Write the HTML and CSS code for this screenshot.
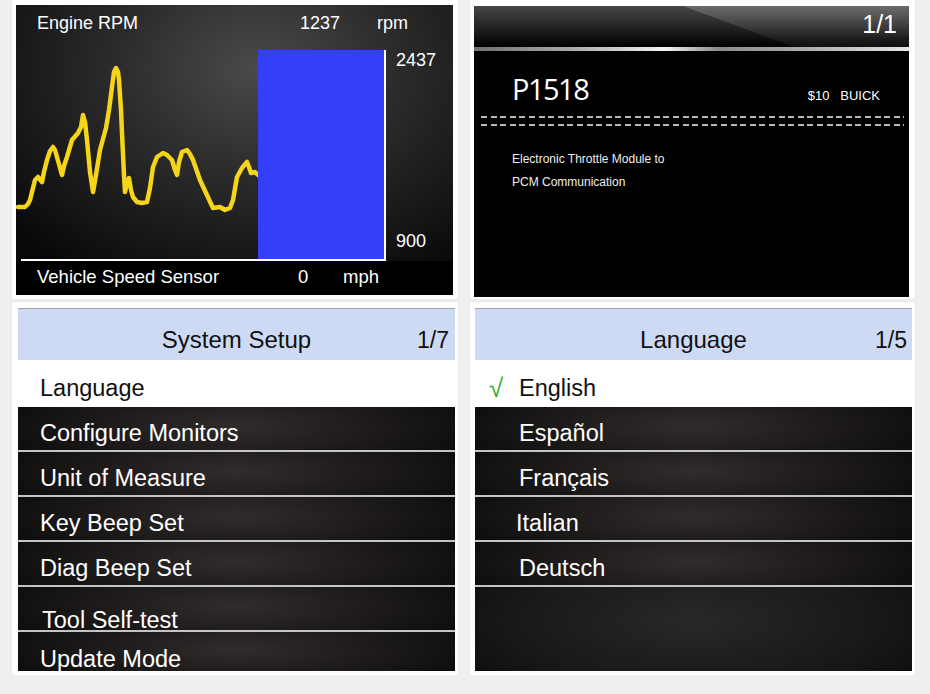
FILE: index.html
```html
<!DOCTYPE html>
<html lang="en">
<head>
    <meta charset="UTF-8">
    <meta name="viewport" content="width=device-width, initial-scale=1.0">
    <title>Scanner Screens</title>
    <link rel="stylesheet" href="styles.css">
</head>
<body>
    <div class="board">
        <!-- Live data graph -->
        <section class="card card-rpm">
            <div class="rpm-screen">
                <div class="rpm-head">
                    <span class="rpm-label">Engine RPM</span>
                    <span class="rpm-value">1237</span>
                    <span>rpm</span>
                </div>
                <div class="rpm-body">
                    <div class="rpm-chart">
                        <svg class="rpm-line" width="242" height="209" viewBox="0 0 242 209">
                            <polyline points="2,157 9,157 12,154 14,150 17,138 19,130 22,127 26,132 28,122 31,110 34,101 37,97 39,100 41,107 46,125 48,116 51,107 56,90 62,83 65,77 67,65 69,72 71,90 74,122 77,142 80,125 84,100 90,78 93,60 96,37 98,22 100,18 102,22 103,30 105,60 106,83 108,125 109,142 111,133 113,128 115,140 117,147 121,152 126,153 131,152 134,138 137,117 141,107 147,103 151,105 156,110 159,120 161,125 163,112 166,102 171,100 174,104 177,110 184,130 190,143 197,158 204,157 209,160 214,158 217,150 221,127 226,118 231,112 233,117 235,123 239,122 242,125"/>
                        </svg>
                        <div class="rpm-bar"></div>
                    </div>
                    <div class="rpm-scale">
                        <span>2437</span>
                        <span>900</span>
                    </div>
                </div>
                <div class="rpm-foot">
                    <span class="foot-label">Vehicle Speed Sensor</span>
                    <span class="foot-value">0</span>
                    <span>mph</span>
                </div>
            </div>
        </section>

        <!-- Trouble code -->
        <section class="card card-dtc">
            <div class="dtc-screen">
                <div class="dtc-head"><span class="dtc-page">1/1</span></div>
                <div class="dtc-rule"></div>
                <div class="dtc-code">
                    <span class="code">P1518</span>
                    <span class="make">$10&nbsp;&nbsp;&nbsp;BUICK</span>
                </div>
                <div class="dashes"></div>
                <div class="dashes dashes-second"></div>
                <p class="dtc-desc">Electronic Throttle Module to<br>PCM Communication</p>
            </div>
        </section>

        <!-- Setup menu -->
        <section class="card card-menu card-left">
            <div class="menu-title">
                <span></span>
                <span class="title">System Setup</span>
                <span class="page">1/7</span>
            </div>
            <div class="item selected">Language</div>
            <div class="item">Configure Monitors</div>
            <div class="item">Unit of Measure</div>
            <div class="item">Key Beep Set</div>
            <div class="item">Diag Beep Set</div>
            <div class="item item-low nudge">Tool Self-test</div>
            <div class="item item-last">Update Mode</div>
        </section>

        <!-- Language menu -->
        <section class="card card-menu card-right">
            <div class="menu-title">
                <span></span>
                <span class="title">Language</span>
                <span class="page">1/5</span>
            </div>
            <div class="item selected lang"><span class="check">√</span>English</div>
            <div class="item lang">Español</div>
            <div class="item lang">Français</div>
            <div class="item lang pull">Italian</div>
            <div class="item lang">Deutsch</div>
            <div class="item-empty"></div>
        </section>
    </div>
</body>
</html>
```

FILE: styles.css
```css
:root {
    --page: #efefef;
    --blue: #3340f8;
    --yellow: #f5d41a;
    --title-bg: #cedaf3;
    --rule: #c4c4c4;
    --check: #2fb02f;
}
* {
    box-sizing: border-box;
}
body {
    margin: 0;
    background: var(--page);
    font-family: "Liberation Sans", Arial, sans-serif;
}
.board {
    display: grid;
    grid-template-columns: 446px 445px;
    grid-template-rows: 299px 373px;
    column-gap: 12px;
    row-gap: 3px;
    padding-left: 12px;
}
.card {
    background: #fff;
    border-radius: 2px;
    box-shadow: 0 0 2px rgba(0, 0, 0, 0.08);
}
.card-rpm {
    padding: 5px 5px 4px 4px;
}
.card-dtc {
    padding: 6px 6px 2px 4px;
}
.card-left {
    padding: 6px 3px 4px 6px;
}
.card-right {
    padding: 6px 3px 4px 5px;
}

/* live data */
.rpm-screen {
    height: 100%;
    color: #fff;
    font-size: 18px;
    line-height: 21px;
    background: radial-gradient(ellipse 75% 85% at 55% 22%, #4a4a4a 0%, #2a2a2a 45%, #080808 100%);
    display: flex;
    flex-direction: column;
}
.rpm-head {
    height: 45px;
    padding: 8px 0 0 21px;
    display: flex;
}
.rpm-label {
    width: 263px;
}
.rpm-value {
    width: 77px;
}
.rpm-body {
    height: 211px;
    display: flex;
}
.rpm-chart {
    width: 370px;
    height: 211px;
    display: flex;
    align-items: flex-start;
    background: linear-gradient(#fff, #fff) no-repeat 5px 100% / 365px 2px;
}
.rpm-line {
    display: block;
    overflow: visible;
}
.rpm-line polyline {
    fill: none;
    stroke: var(--yellow);
    stroke-width: 4.5;
    stroke-linejoin: round;
    stroke-linecap: round;
}
.rpm-bar {
    width: 128px;
    height: 209px;
    background: var(--blue);
    border-right: 2px solid #fff;
}
.rpm-scale {
    flex: 1;
    display: flex;
    flex-direction: column;
    justify-content: space-between;
    padding: 0 0 9px 10px;
}
.rpm-foot {
    flex: 1;
    padding: 5px 0 0 21px;
    font-size: 18.5px;
    background: #000;
    display: flex;
}
.foot-label {
    width: 261px;
}
.foot-value {
    width: 45px;
}

/* trouble code */
.dtc-screen {
    height: 100%;
    background: #000;
    color: #fff;
}
.dtc-head {
    position: relative;
    height: 41px;
    padding: 4px 12px 0 0;
    display: flex;
    justify-content: flex-end;
    background: linear-gradient(180deg, #464646 0%, #242424 50%, #000 100%);
    overflow: hidden;
}
.dtc-head::before {
    content: "";
    position: absolute;
    inset: 0;
    background: linear-gradient(180deg, rgba(255, 255, 255, 0.2) 0%, rgba(255, 255, 255, 0.06) 80%);
    clip-path: polygon(209px 0, 100% 0, 100% 100%, 320px 100%);
}
.dtc-page {
    position: relative;
    font-size: 25px;
    line-height: 29px;
}
.dtc-rule {
    height: 4px;
    background: linear-gradient(90deg, #707070 0%, #a8a8a8 22%, #f4f4f4 44%, #8a8a8a 56%, #b0b0b0 78%, #e8e8e8 100%);
}
.dtc-code {
    margin-top: 22px;
    padding: 0 29px 0 38px;
    display: flex;
    justify-content: space-between;
    align-items: baseline;
}
.code {
    font-family: "Open Sans", sans-serif;
    font-size: 29px;
    line-height: 32px;
    letter-spacing: -1.5px;
}
.make {
    font-size: 13px;
}
.dashes {
    height: 2px;
    margin: 11px 5px 0 7px;
    background: repeating-linear-gradient(90deg, #b8b8b8 0 6px, transparent 6px 9.6px);
}
.dashes-second {
    margin-top: 6px;
}
.dtc-desc {
    margin: 22px 0 0 38px;
    font-size: 12px;
    line-height: 23px;
    color: #eee;
}

/* menus */
.card-menu {
    display: flex;
    flex-direction: column;
}
.menu-title {
    height: 52px;
    border-top: 1px solid #a2a2a2;
    background: var(--title-bg);
    padding-bottom: 6px;
    display: grid;
    grid-template-columns: 1fr auto 1fr;
    align-items: end;
    color: #111;
    font-size: 24px;
    line-height: 28px;
}
.page {
    justify-self: end;
    padding-right: 6px;
    font-size: 23px;
}
.card-right .page {
    padding-right: 5px;
}
.item {
    height: 45px;
    padding: 0 0 5px 22px;
    display: flex;
    align-items: flex-end;
    font-size: 23.5px;
    line-height: 23.5px;
    color: #fff;
    border-bottom: 2px solid var(--rule);
    background: radial-gradient(ellipse 65% 140% at 50% 45%, #302c2c 0%, #171414 65%, #0a0707 100%);
}
.item.selected {
    height: 47px;
    padding-bottom: 7px;
    background: #fff;
    color: #111;
    border-bottom: none;
}
.item-low {
    padding-bottom: 0;
}
.item-low.nudge {
    padding-left: 24px;
    line-height: 19px;
}
.item-last {
    flex: 1;
    height: auto;
    padding-bottom: 0;
    border-bottom: none;
}
.lang {
    padding-left: 44px;
}
.lang.selected {
    padding-left: 14px;
}
.lang.pull {
    padding-left: 41px;
}
.check {
    width: 30px;
    color: var(--check);
    font-size: 26px;
    font-family: "DejaVu Sans", sans-serif;
    font-weight: 300;
}
.item-empty {
    flex: 1;
    background: radial-gradient(ellipse 65% 120% at 50% 40%, #2a2727 0%, #1a1717 65%, #0e0b0b 100%);
}
```
